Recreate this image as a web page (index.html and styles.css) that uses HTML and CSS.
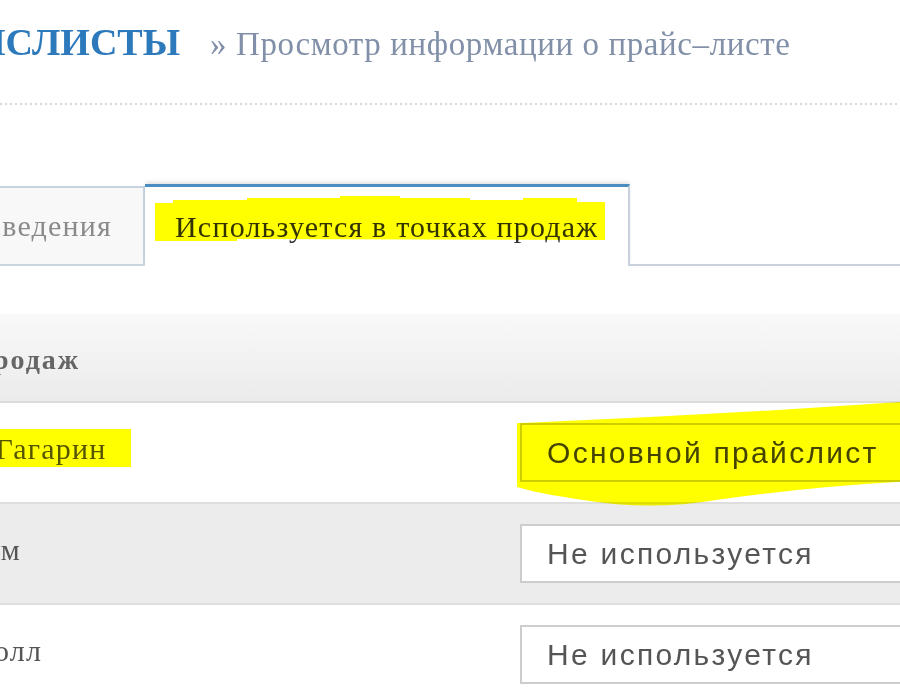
FILE: index.html
```html
<!DOCTYPE html>
<html lang="ru">
<head>
<meta charset="utf-8">
<title>Прайслисты — просмотр информации о прайс-листе</title>
<link rel="stylesheet" href="styles.css">
</head>
<body>
<div class="page">
  <header class="head">
    <div class="brand"><h1 class="title">ПРАЙСЛИСТЫ</h1></div>
    <span class="crumb">» Просмотр информации о прайс–листе</span>
  </header>
  <div class="rule"></div>
  <nav class="tabs">
    <div class="tab tab-idle"><span>Основные сведения</span></div>
    <div class="tab tab-active">
      <span>Используется в точках продаж</span>
      <svg class="marker marker-tab" width="470" height="60" viewBox="0 0 470 60"><polygon points="10,16 28,16 28,13 102,13 102,11 195,11 195,9 255,9 255,11 325,11 325,13 378,13 378,11 432,11 432,15 460,15 460,53 92,52 92,54 10,54"/></svg>
    </div>
    <div class="tab-rest"></div>
  </nav>
  <table class="points">
    <colgroup><col class="c-name"><col class="c-list"></colgroup>
    <thead>
      <tr><th>Точки продаж</th><th></th></tr>
    </thead>
    <tbody>
      <tr class="row">
        <td class="name">ТРЦ Ю. <span class="hl-text">Гагарин<span class="hl"></span></span></td>
        <td>
          <div class="pick-wrap">
            <select class="pick pick-on"><option>Основной прайслист</option><option>Не используется</option></select>
            <svg class="marker marker-blob" width="400" height="112" viewBox="0 0 400 112"><path d="M1,22 L6,22 Q200,14 400,0 L400,80 Q300,85 200,99 Q134,110 67,99 Q20,92 1,86 Z"/></svg>
          </div>
        </td>
      </tr>
      <tr class="row row-alt">
        <td class="name">ТЦ Форум</td>
        <td>
          <div class="pick-wrap">
            <select class="pick"><option>Не используется</option><option>Основной прайслист</option></select>
          </div>
        </td>
      </tr>
      <tr class="row">
        <td class="name">Плаза Молл</td>
        <td>
          <div class="pick-wrap">
            <select class="pick"><option>Не используется</option><option>Основной прайслист</option></select>
          </div>
        </td>
      </tr>
    </tbody>
  </table>
</div>
</body>
</html>
```

FILE: styles.css
```css
* { box-sizing: border-box; }

html, body {
  margin: 0;
  padding: 0;
  background: #fff;
}

body {
  width: 900px;
  height: 700px;
  overflow: hidden;
  font-family: "Liberation Serif", "Times New Roman", serif;
  color: #333;
}

/* ---------- heading ---------- */
.head {
  display: flex;
  align-items: baseline;
  height: 103px;
  padding-top: 23px;
}

.brand {
  flex: 0 0 180px;
  min-width: 0;
  display: flex;
  justify-content: flex-end;
}

.title {
  flex: 0 0 auto;
  margin: 0;
  font-size: 38px;
  line-height: 1;
  font-weight: bold;
  color: #2c79bb;
  white-space: nowrap;
}

.crumb {
  margin-left: 30px;
  font-size: 33px;
  line-height: 1;
  color: #8190a8;
  letter-spacing: 0.6px;
  white-space: nowrap;
}

.rule {
  height: 2px;
  background: repeating-linear-gradient(to right, #d8d8d8 0 2px, transparent 2px 5px);
}

/* ---------- tabs ---------- */
.tabs {
  display: flex;
  align-items: flex-end;
  margin-top: 79px;
}

.tab {
  display: flex;
  align-items: center;
  font-size: 30px;
  letter-spacing: 1.2px;
  white-space: nowrap;
}

.tab > span { flex: 0 0 auto; }

.tab-idle {
  flex: 0 0 145px;
  min-width: 0;
  height: 80px;
  justify-content: flex-end;
  padding-right: 31px;
  background: #f8f8f8;
  border: 2px solid #c9d4e1;
  border-left: 0;
  color: #8a8a8a;
}

.tab-active {
  position: relative;
  flex: 0 0 auto;
  height: 82px;
  padding: 0 30px;
  background: #fff;
  border-top: 3px solid #4b8dc1;
  border-right: 2px solid #c9d1dc;
  box-shadow: 0 -3px 4px -1px rgba(0, 0, 0, 0.12);
  color: #333;
}

.tab-rest {
  flex: 1;
  border-bottom: 2px solid #c9d1dc;
}

/* ---------- highlighter marks ---------- */
.marker {
  position: absolute;
  fill: #ffff00;
  mix-blend-mode: multiply;
  pointer-events: none;
}

.marker-tab {
  left: 0;
  top: 0;
}

.marker-blob {
  left: -4px;
  top: -22px;
}

.hl-text {
  position: relative;
}

.hl {
  position: absolute;
  left: -12px;
  right: -25px;
  top: -3px;
  bottom: -2px;
  background: #ffff00;
  mix-blend-mode: multiply;
}

/* ---------- table ---------- */
.points {
  border-collapse: separate;
  border-spacing: 0;
  table-layout: fixed;
  width: 1063px;
  margin: 48px 0 0 -123px;
}

.c-name { width: 643px; }
.c-list { width: 420px; }

.points th {
  height: 89px;
  padding: 4px 0 0;
  text-align: left;
  font-size: 28px;
  font-weight: bold;
  letter-spacing: 2px;
  color: #666;
  background: linear-gradient(#f9f9f9, #ebebeb);
  border-bottom: 2px solid #dcdcdc;
}

.points td {
  height: 101px;
  padding: 0;
  border-bottom: 2px solid #dedede;
  font-size: 30px;
  letter-spacing: 1.2px;
  color: #555;
  vertical-align: middle;
}

.points td.name {
  padding-bottom: 7px;
  white-space: nowrap;
}

.row { background: #fff; }
.row-alt { background: #ececec; }

.pick-wrap {
  position: relative;
  width: 420px;
}

.pick {
  display: block;
  width: 100%;
  height: 59px;
  margin: 0;
  padding: 0 0 0 25px;
  -webkit-appearance: none;
  appearance: none;
  border: 2px solid #cdcdcd;
  border-radius: 0;
  background: #fff;
  font-family: "Liberation Sans", Arial, sans-serif;
  font-size: 30px;
  letter-spacing: 2.3px;
  color: #555;
  outline: none;
}

.pick-on { color: #444; }
```
